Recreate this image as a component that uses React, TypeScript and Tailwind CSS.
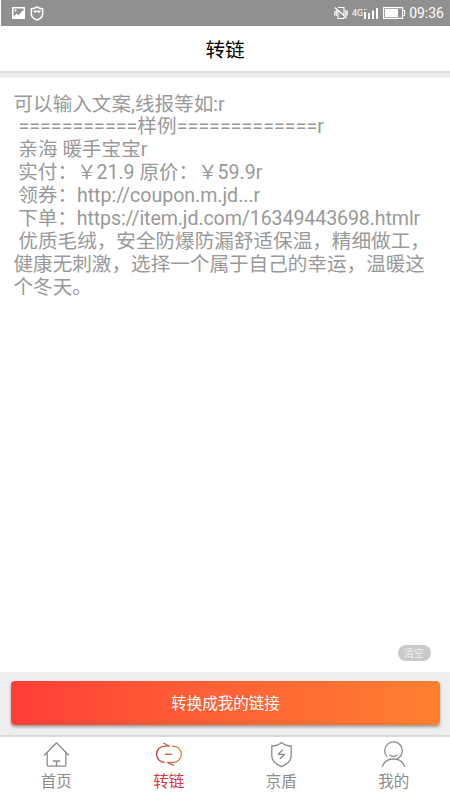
import type { ReactNode } from "react";

const sample = [
  { text: "可以输入文案,线报等如:r" },
  { text: " ===========样例=============r", spacing: "tracking-[0.06px]" },
  { text: " 亲海 暖手宝宝r" },
  { text: " 实付：￥21.9 原价：￥59.9r", spacing: "tracking-[-0.04px]" },
  { text: " 领券：http://coupon.m.jd...r", spacing: "tracking-[-0.04px]" },
  { text: " 下单：https://item.jd.com/16349443698.htmlr", spacing: "tracking-[-0.1px]" },
  { text: " 优质毛绒，安全防爆防漏舒适保温，精细做工，" },
  { text: "健康无刺激，选择一个属于自己的幸运，温暖这" },
  { text: "个冬天。" },
];

const tabs: { label: string; active?: boolean; icon: ReactNode }[] = [
  {
    label: "首页",
    icon: (
      <>
        <path d="M1.600 14 13.500 1.800 25.400 14" />
        <path d="M4.200 12.500v11.500q0 1.200 1.200 1.200h16.200q1.200 0 1.200-1.200V12.500" />
        <path d="M10.300 20h6.400M13.500 20v5" />
      </>
    ),
  },
  {
    label: "转链",
    active: true,
    icon: (
      <>
        <defs>
          <linearGradient id="link" x1="0" y1="0" x2="27" y2="0" gradientUnits="userSpaceOnUse">
            <stop offset="0" stopColor="#d8323c" />
            <stop offset="1" stopColor="#e58a45" />
          </linearGradient>
        </defs>
        <g stroke="url(#link)">
          <path d="M8.900 2.200 14.400 5.200H9.600a8.050 8.050 0 0 0 0 16.100" />
          <path d="M17.500 5.200h.8a8.050 8.050 0 0 1 0 16.100h-5.700l6 3" />
          <path d="M10.500 13.200h6.500v.1h-6.500z" strokeWidth="1" />
        </g>
      </>
    ),
  },
  {
    label: "京盾",
    icon: (
      <>
        <path d="M13.500 1.500q4 3.400 9.700 3.500v10q0 6.500-9.700 10.700Q3.800 21.500 3.800 15V5q5.700-.1 9.700-3.500Z" />
        <path d="m14.500 9-4.200 4.300h6.300l-4.300 4.200" />
      </>
    ),
  },
  {
    label: "我的",
    icon: (
      <>
        <path d="M6.800 15.400a8.800 8.800 0 1 1 12 1.300l-1.600 1.200" />
        <path d="M9.800 14.200q3.700 2.600 7.200 0" />
        <path d="M2.300 25.500C4 20.800 8 18 13.500 18S23 20.800 24.700 25.500" />
      </>
    ),
  },
];

function StatusBar() {
  return (
    <div className="ml-px flex h-[26px] shrink-0 items-center bg-[#909090] pl-[11px] pr-[6px] text-white">
      <svg width="13" height="12" viewBox="0 0 13 12">
        <path fill="#fff" fillRule="evenodd" d="M0 0h13v12H0zM1.500 1.500v8.300l3.200-3.300 2 1.700L10.500 3.500l1 1v-3z" />
        <circle cx="3.500" cy="3.500" r="1" fill="#fff" />
      </svg>
      <svg className="ml-[5px]" width="14" height="15" viewBox="0 0 14 15" fill="none" stroke="#fff" strokeWidth="1.500">
        <path d="M7 1q2.700 1.600 5.600 1.700v5.500q0 3.600-5.600 5.800Q1.400 11.800 1.400 8.200V2.700Q4.300 2.600 7 1Z" />
        <path d="M3.500 5.200h7M4.500 6.200h1.500M8 6.200h1.500" />
      </svg>
      <div className="flex-1" />
      <svg width="14" height="14" viewBox="0 0 14 14" fill="none" stroke="#fff" strokeWidth="1.100">
        <path d="M4 1.500h6v7M10 11v1.500H4V5M.8 5v4.500M2.300 4v6M11.800 4v6M13.200 4.500v5M.8 1.500l12 10.500" />
      </svg>
      <span className="ml-[4px] mt-px font-[Roboto] text-[9px] leading-none">4G</span>
      <svg className="ml-px" width="14" height="12" viewBox="0 0 14 12" fill="#fff">
        <path d="M0 5h2v7H0zM0 2h1v1H0zM2 2h1v1H2zM4 6h2v6H4zM8 3.500h2V12H8zM12 1h2v11h-2z" />
      </svg>
      <svg className="ml-[5px]" width="23" height="12" viewBox="0 0 23 12" fill="none">
        <path d="M.6.600h19v10.800H.600zM20 3.500h1.600v5H20" stroke="#fff" strokeWidth="1.100" />
        <path d="M2 2h13v8H2z" fill="#fff" />
      </svg>
      <span className="ml-[3px] font-[Roboto] text-[14px] leading-none">09:36</span>
    </div>
  );
}

export default function App() {
  return (
    <div className="flex h-[800px] w-[450px] flex-col overflow-hidden bg-white font-[Roboto,'Noto_Sans_CJK_SC',sans-serif]">
      <StatusBar />

      <header className="flex h-[45px] shrink-0 items-center justify-center pt-[5px] text-[19.600px] text-black">
        转链
      </header>
      <div className="h-[7px] shrink-0 border-t-2 border-[#dcdedc] bg-[#eeeeee]" />

      <main className="flex flex-1 flex-col px-[13.500px] pt-[15.500px]">
        <div className="whitespace-pre text-[19.600px] leading-[22.900px] text-[#999999]">
          {sample.map((line) => (
            <div key={line.text} className={line.spacing}>
              {line.text}
            </div>
          ))}
        </div>
        <button className="mb-[11px] mr-[6px] mt-auto flex h-[16px] w-[33px] items-center justify-center self-end rounded-full bg-[#c9c9c9] pt-px text-[10px] leading-none text-[#f2f2f2]">
          清空
        </button>
      </main>

      <div className="h-[63px] shrink-0 bg-[#eeeeee] pl-[11px] pr-[10px] pt-[9px]">
        <button className="flex h-[44px] w-full items-center justify-center rounded-[4px] bg-linear-to-r from-[#ff3d38] to-[#ff7f30] pt-[3px] text-[15.500px] text-white shadow-[0_2px_3px_rgba(0,0,0,0.35)]">
          转换成我的链接
        </button>
      </div>

      <nav className="grid h-[65px] shrink-0 grid-cols-4 border-t-2 border-[#d8dcd8]">
        {tabs.map((tab) => (
          <div
            key={tab.label}
            className={`flex flex-col items-center pt-[4px] text-[15.500px] leading-[22px] ${
              tab.active ? "text-[#e0353f]" : "text-[#8c8c8c]"
            }`}
          >
            <svg width="27" height="27" viewBox="0 0 27 27" fill="none" stroke="currentColor" strokeWidth="1.300" strokeLinecap="round" strokeLinejoin="round">
              {tab.icon}
            </svg>
            <span className="mt-[3px]">{tab.label}</span>
          </div>
        ))}
      </nav>
    </div>
  );
}
